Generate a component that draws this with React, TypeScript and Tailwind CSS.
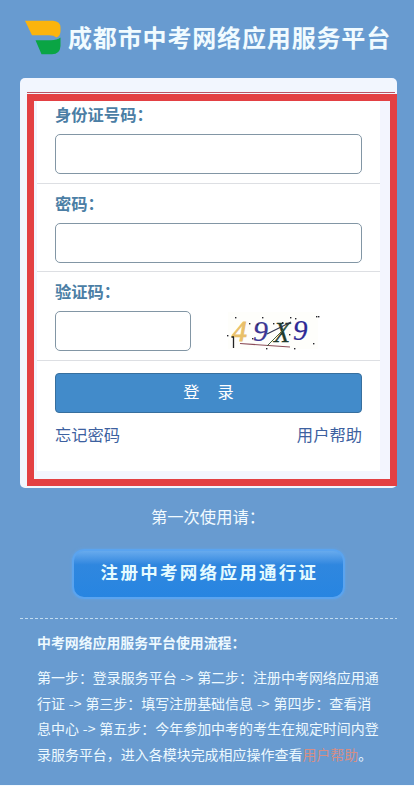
import type { ReactNode } from "react";

const steps = [
	"第一步：登录服务平台 -> 第二步：注册中考网络应用通",
	"行证 -> 第三步：填写注册基础信息 -> 第四步：查看消",
	"息中心 -> 第五步：今年参加中考的考生在规定时间内登",
];

const captchaDots = [
	[12, 13], [39, 13], [67, 13], [72, 14], [93, 12], [95, 12], [26, 19], [34, 20],
	[50, 19], [59, 18], [4, 31], [29, 34], [66, 30], [43, 44], [71, 44], [90, 39],
];

function Logo() {
	return (
		<svg width="38" height="36" viewBox="0 0 38 36" className="shrink-0" aria-hidden>
			<path d="M1 .8H29Q36.5 1.5 36.5 7.5V11Q36.5 16 32.5 17.5Q30 15.2 25 15.2H8Z" fill="#fbb40d" />
			<path d="M11.5 20.3H27Q33 20.3 36.5 17.5V26Q36 34.2 28 34.2H17.5Z" fill="#0aa544" />
		</svg>
	);
}

function Captcha() {
	return (
		<svg
			width="96"
			height="40"
			viewBox="0 0 96 40"
			className="ml-[33px] overflow-visible"
			role="img"
			aria-label="验证码"
		>
			<rect x="4" y="1" width="90" height="37" fill="#fefefb" />
			<g fontFamily="'Liberation Serif', serif" fontStyle="italic" fontSize="28">
				<text x="8" y="30" fontSize="30" fill="#e9c069" stroke="#e9c069" strokeWidth=".8">4</text>
				<text x="29" y="30" fontSize="30" fill="#3c3794" stroke="#3c3794" strokeWidth=".2">9</text>
				<text x="50" y="31" fontSize="29" fill="#1f3b2d" stroke="#1f3b2d" strokeWidth=".4" textLength="16" lengthAdjust="spacingAndGlyphs">X</text>
				<text x="69" y="29" fontSize="29" fill="#2d2996" stroke="#2d2996" strokeWidth=".2">9</text>
			</g>
			<path d="M7.5 26H10M9.5 26V37" stroke="#222" strokeWidth="1.3" fill="none" />
			<path d="M16 32.5L66 36" stroke="#8b4c58" strokeWidth="1.2" />
			<path d="M43 23L67 11" stroke="#30344e" strokeWidth="1.1" />
			<path d="M43 35L65 13" stroke="#426343" strokeWidth="1" />
			{captchaDots.map(([x, y]) => (
				<rect key={`${x}-${y}`} x={x - 1} y={y - 7} width="1.4" height="1.4" fill="#27272d" />
			))}
		</svg>
	);
}

function Field({
	label,
	id,
	type = "text",
	rowClass = "h-[88.5px] pt-[7px]",
	inputClass = "w-full",
	children,
}: {
	label: string;
	id: string;
	type?: string;
	rowClass?: string;
	inputClass?: string;
	children?: ReactNode;
}) {
	return (
		<div className={`border-b border-[#dddfe3] px-[18px] ${rowClass}`}>
			<label htmlFor={id} className="mb-[8px] block h-[24px] text-[16.3px] leading-[24px] font-bold text-[#4b7ea5]">
				{label}
			</label>
			<div className="flex items-center">
				<input
					id={id}
					type={type}
					className={`h-[40px] rounded-[5px] border border-[#8296a5] bg-white px-3 outline-none ${inputClass}`}
				/>
				{children}
			</div>
		</div>
	);
}

export default function App() {
	return (
		<div className="h-[786px] w-[414px] overflow-hidden bg-[#f4faff] font-['Noto_Sans_CJK_SC',sans-serif]">
			<main className="h-[785px] bg-[#689bd0]">
				<header className="flex h-[78px] items-start pt-[20px] pl-[24px]">
					<Logo />
					<h1 className="-mt-px ml-[6px] h-[36px] text-[24px] leading-[36px] font-bold tracking-[0.85px] whitespace-nowrap text-[#f1fbff]">
						成都市中考网络应用服务平台
					</h1>
				</header>

				<section className="ml-[20px] h-[410px] w-[377px] rounded-[5px] bg-[#f2f6fe] pt-[14px] pl-[7px]">
					<div className="h-px w-[368px] bg-[#b95464]" />
					<div className="mt-px h-[392px] w-[370px] border-[7px] border-[#e34043] bg-[#f3f5fe] pl-[3px]">
						<form className="h-[370px] w-[343px] bg-white" onSubmit={(e) => e.preventDefault()}>
							<Field label="身份证号码：" id="idcard" rowClass="h-[82.5px] pt-[1px]" />
							<Field label="密码：" id="password" type="password" />
							<Field label="验证码：" id="captcha" inputClass="w-[136px]">
								<Captcha />
							</Field>
							<div className="px-[18px] pt-[12px]">
								<button
									type="submit"
									className="block h-[40px] w-full rounded-[4px] border border-[#376f9e] bg-[#428bca] pb-[3px] text-[16.3px] leading-[34px] whitespace-pre text-white [word-spacing:0.8px]"
								>
									登{"    "}录
								</button>
								<div className="mt-[9px] flex justify-between text-[16.3px] leading-[24px] text-[#3d61a0]">
									<a href="#forgot">忘记密码</a>
									<a href="#help">用户帮助</a>
								</div>
							</div>
						</form>
					</div>
				</section>

				<p className="mt-[16px] pl-[151px] text-[16.3px] leading-[24px] text-[#f1faff]">第一次使用请：</p>

				<button
					type="button"
					className="mt-[21px] ml-[72px] block h-[50px] w-[273px] rounded-[12px] border-2 border-[#5ba4ef] bg-linear-to-b from-[#67aaed] via-[#2f87df] via-30% to-[#2785e1] pb-[4px] pl-[2px] text-[17.5px] leading-[42px] font-bold tracking-[2.3px] whitespace-nowrap text-[#e5fbff] shadow-[0_0_3px_#60a4e8]"
				>
					注册中考网络应用通行证
				</button>

				<svg width="377" height="1" className="mt-[19px] ml-[20px] block" aria-hidden>
					<path d="M0 .5H377" stroke="#c2dcf0" strokeDasharray="3 2" />
				</svg>

				<footer className="pl-[37px] whitespace-nowrap text-[#edf9ff]">
					<h2 className="mt-[11px] text-[13.9px] leading-[25.7px] font-bold">中考网络应用服务平台使用流程：</h2>
					<div className="mt-[9px] text-[13.98px] leading-[25.8px] [word-spacing:0.8px]">
						{steps.map((line) => (
							<p key={line}>{line}</p>
						))}
						<p>
							录服务平台，进入各模块完成相应操作查看
							<a href="#help" className="text-[#d58e86]">用户帮助</a>。
						</p>
					</div>
				</footer>
			</main>
		</div>
	);
}
